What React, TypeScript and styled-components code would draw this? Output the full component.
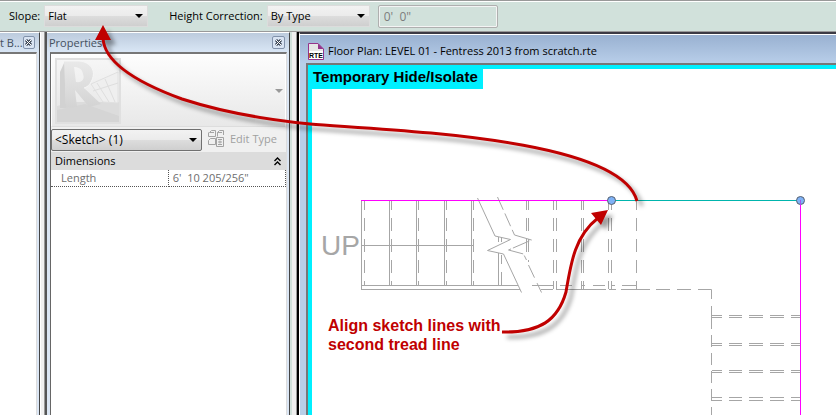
import React from "react";
import styled, { createGlobalStyle } from "styled-components";

const GlobalStyle = createGlobalStyle`
  * { box-sizing: border-box; }
  html, body, #root { height: 100%; }
  body {
    margin: 0;
    overflow: hidden;
    background: #fff;
    color: #000;
    font-family: "Open Sans", "Noto Sans", sans-serif;
    font-size: 11px;
    line-height: 16px;
  }
  select, button, input { font: inherit; color: inherit; margin: 0; }
`;

const Page = styled.div`
  position: relative;
  display: flex;
  flex-direction: column;
  height: 100vh;
  overflow: hidden;
`;

const OptionsBar = styled.header`
  display: flex;
  flex: none;
  align-items: center;
  height: 32px;
  padding: 0 9px;
  background: #d1e1db;
  border-top: 1px solid #999;
  border-bottom: 1px solid #999;
  box-shadow: inset 0 1px #fff;
`;

const Field = styled.div<{ $after: number }>`
  display: flex;
  align-items: center;
  gap: 4px;
  margin-right: ${(p) => p.$after}px;
`;

const SelectBox = styled.span<{ $width: number; $framed?: boolean }>`
  display: grid;
  align-items: center;
  flex: none;
  width: ${(p) => p.$width}px;
  height: 22px;
  border: 1px solid ${(p) => (p.$framed ? "#707070" : "#dcdcdc")};
  border-radius: ${(p) => (p.$framed ? 2 : 0)}px;
  background: linear-gradient(#f2f2f2, #ebebeb 50%, #dddddd 51%, #cfcfcf);
  font-size: ${(p) => (p.$framed ? 12 : 11)}px;
  > * { grid-area: 1 / 1; }
  svg { justify-self: end; margin-right: 4px; pointer-events: none; }
`;

const Select = styled.select`
  appearance: none;
  width: 100%;
  height: 20px;
  padding: 0 14px 0 3px;
  border: 0;
  background: transparent;
`;

const OffsetInput = styled.input`
  width: 120px;
  height: 23px;
  padding: 0 5px;
  border: 1px solid #afafaf;
  border-radius: 2px;
  background: transparent;
  box-shadow: inset 0 0 0 1px #f4f4f4;
  color: #7d7d7d;
  font-size: 12px;
  white-space: pre;
`;

const Workspace = styled.main`
  display: flex;
  flex: 1;
  min-height: 0;
`;

const Dock = styled.section<{ $width: number }>`
  display: flex;
  flex: none;
  flex-direction: column;
  width: ${(p) => p.$width}px;
  border-top: 1px solid #fff;
  border-right: 1px solid #444;
  background: #dbe6f4;
`;

const DockTitle = styled.div`
  display: flex;
  flex: none;
  align-items: center;
  justify-content: space-between;
  height: 19px;
  padding: 0 4px 0 0;
  background: linear-gradient(#bccbdd, #d9e6f5);
  color: #44505f;
  white-space: nowrap;
`;

const DockName = styled.span<{ $indent?: boolean }>`
  padding-left: ${(p) => (p.$indent ? 2 : 0)}px;
`;

const CloseButton = styled.button`
  display: grid;
  place-items: center;
  width: 13px;
  height: 13px;
  padding: 0;
  border: 1px solid #8292ab;
  border-radius: 2px;
  background: #d9e4f3;
`;

const DockBody = styled.div`
  flex: 1;
  margin-right: 2px;
  border-top: 2px solid #777;
  border-right: 1px solid #ddd;
  background: #fff;
`;

const InsetBody = styled(DockBody)`
  margin-left: 3px;
  border-left: 1px solid #666;
`;

const Gutter = styled.div<{ $wide?: boolean }>`
  flex: none;
  width: ${(p) => (p.$wide ? 9 : 7)}px;
  background: ${(p) =>
    p.$wide
      ? "linear-gradient(to right, #d1e1db 0 2px, #f0f0f0 2px 6px, #999 6px 7px, #000 7px)"
      : "linear-gradient(to right, #fff 0 1px, #f0f0f0 1px 4px, #999 4px 5px, #555 5px)"};
`;

const TypePreview = styled.div`
  display: flex;
  align-items: center;
  justify-content: space-between;
  height: 73px;
  padding: 0 2px 0 3px;
  border: 1px solid #fff;
  border-bottom-color: #ddd;
  background: linear-gradient(#fdfdfd, #e8e8e8);
`;

const TypeRow = styled.div`
  display: flex;
  align-items: center;
  gap: 6px;
  height: 25px;
  background: #f0f0f0;
`;

const EditType = styled.button`
  display: flex;
  align-items: center;
  gap: 5px;
  padding: 0 0 2px;
  border: 0;
  background: none;
  white-space: nowrap;
  &:disabled { color: #a0a0a0; }
`;

const GroupHeader = styled.button`
  display: flex;
  align-items: center;
  justify-content: space-between;
  width: 100%;
  height: 18px;
  padding: 0 5px 0 4px;
  border: 0;
  background: #dcdcdc;
`;

const PropertyTable = styled.table`
  width: 100%;
  border-collapse: collapse;
  table-layout: fixed;
  color: #6d6d6d;
  th, td {
    height: 16px;
    padding: 0 0 0 4px;
    border-right: 1px dotted #555;
    border-bottom: 1px dotted #555;
    font-weight: 400;
    text-align: left;
    white-space: pre;
  }
  th { width: 50%; padding-left: 10px; }
`;

const ViewWindow = styled.section`
  display: flex;
  flex: 1;
  flex-direction: column;
  min-width: 0;
  border-top: 2px solid #3c3a44;
  border-left: 1px solid #fff;
  background: #b8cfe8;
`;

const ViewTitle = styled.div`
  display: flex;
  flex: none;
  align-items: center;
  gap: 4px;
  height: 29px;
  padding: 4px 0 0 8px;
  border-top: 1px solid #fff;
  background: linear-gradient(#99b1d1, #b8cee9);
  white-space: nowrap;
`;

const Viewport = styled.div`
  position: relative;
  flex: 1;
  min-height: 0;
  margin-left: 6px;
  overflow: hidden;
  border-top: 2px solid #777;
  border-left: 2px solid #777;
  background: #fff;
  box-shadow: inset 4px 4px #00f0ff;
`;

const IsolateBadge = styled.div`
  width: max-content;
  height: 24px;
  padding: 4px 5px;
  background: #00f0ff;
  font: bold 15px/16px "Liberation Sans", Arial, sans-serif;
`;

const Plan = styled.svg`
  position: absolute;
  top: 4px;
  left: 4px;
`;

const Note = styled.p`
  position: absolute;
  top: 251px;
  left: 20px;
  margin: 0;
  color: #c00000;
  font: bold 16px/19px "Liberation Sans", Arial, sans-serif;
`;

const Arrows = styled.svg`
  position: absolute;
  top: 0;
  left: 0;
  pointer-events: none;
  filter: drop-shadow(5px 5px 2px rgba(0, 0, 0, 0.38));
`;

const Caret = ({ color = "#000" }: { color?: string }) => (
  <svg width="8" height="4" viewBox="0 0 8 4" aria-hidden="true">
    <path d="M0 0H8L4 4Z" fill={color} />
  </svg>
);

const Close = ({ label }: { label: string }) => (
  <CloseButton aria-label={label}>
    <svg width="9" height="9" viewBox="0 0 9 9" aria-hidden="true">
      <path d="M2 2L7 7M7 2L2 7" stroke="#3b4554" strokeWidth="3" />
      <path d="M2 2L7 7M7 2L2 7" stroke="#fff" strokeWidth="1" />
    </svg>
  </CloseButton>
);

const FamilyThumb = () => (
  <svg width="66" height="66" viewBox="0 0 66 66" aria-hidden="true">
    <defs>
      <linearGradient id="thumb" x1="0" y1="0" x2="0" y2="1">
        <stop offset="0" stopColor="#f6f6f6" />
        <stop offset="1" stopColor="#e4e4e4" />
      </linearGradient>
      <linearGradient id="face" x1="0" y1="0" x2="0" y2="1">
        <stop offset="0" stopColor="#e9e9e9" />
        <stop offset="1" stopColor="#d3d3d3" />
      </linearGradient>
    </defs>
    <rect x="1" y="1" width="64" height="64" fill="url(#thumb)" stroke="#e0e0e0" strokeWidth="2" />
    <path d="M2 48L20 44H64V64H2Z" fill="#dcdcdc" />
    <path d="M2 52L30 46L64 58V64H2Z" fill="#d5d5d5" />
    <path d="M36 26L63 14V45L48 44Z" fill="#efefef" stroke="#e0e0e0" />
    <path d="M42 25L54 44M50 21L60 44M38 33L63 25" stroke="#dedede" fill="none" />
    <path d="M10 3L5 14V50L11 50Z" fill="#d2d2d2" />
    <path fillRule="evenodd" d="M9 3H24C36 4 41 13 37 22C35 27 32 29 29 30L46 46L34 49L20 32L22 49L11 50ZM19 9L21 24C27 25 30 21 28 16C27 11 24 9 19 9Z" fill="url(#face)" />
    <path d="M9 3H24C36 4 41 13 37 22C35 27 32 29 29 30" fill="none" stroke="#f6f6f6" />
  </svg>
);

const EditTypeIcon = () => (
  <svg width="17" height="17" viewBox="0 0 17 17" fill="none" stroke="#a3a3a3" aria-hidden="true">
    <path d="M1.5 2.5L3.5 .5H7.5V6.5H.5V2.5M9.5 6.5V2.5L11.5 .5H15.5V5M.5 10.5L2.5 8.5H7.5V14.5H.5V10.5M1.5 2.5H6M9.5 2.5H14" />
    <path d="M8.5 7.5H15.5V16.5H8.5ZM10 9.5H14M10 14.5H14" />
    <path d="M10 12H14M12 10.5V13.5" />
  </svg>
);

const CollapseIcon = () => (
  <svg width="7" height="9" viewBox="0 0 7 9" fill="none" stroke="#000" strokeWidth="1.4" aria-hidden="true">
    <path d="M.5 4L3.5 1L6.5 4M.5 8L3.5 5L6.5 8" />
  </svg>
);

const RteIcon = () => (
  <svg width="16" height="17" viewBox="0 0 16 17" aria-hidden="true">
    <path d="M.5 .5H10L15.5 6V16.5H.5Z" fill="#e6e6e6" stroke="#95348b" />
    <path d="M10 .5V6H15.5Z" fill="#95348b" />
    <rect x="1" y="8" width="14" height="8" fill="#fff" />
    <text x="8" y="15" textAnchor="middle" fontFamily="Liberation Sans, Arial, sans-serif" fontWeight="700" fontSize="7">RTE</text>
  </svg>
);

const solidTreads = [361, 389, 416, 444, 471];
const dashedTreads = [364, 391, 418, 446, 473, 528, 553, 556, 581, 583, 608, 611];
const lowerTreads = [315, 317, 343, 345, 370, 372, 397, 400];

const PlanDrawing = () => (
  <Plan width="1600" height="1000" viewBox="0 0 1600 1000" role="img" aria-label="Stair plan">
    <g transform="translate(-312 -69)" fill="none" stroke="#a6a6a6">
      <g>
        {solidTreads.map((x) => (
          <path key={x} d={`M${x + 0.5} 201V${x === 361 ? 290 : 285}`} />
        ))}
        <path d="M361 245.5H474M361 285.5H518M361 289.5H520M532 285.5H553M541 289.5H553M556 289.5H606M609 289.5H616M621 289.5H650" />
        <path d="M560 285.5H572M581 285.5H585M593 285.5H605M611 285.5H615M622 285.5H636" />
        <path d="M498.5 237V242M498.5 253V285" />
      </g>
      <g strokeDasharray="13 8" strokeDashoffset="4">
        {dashedTreads.map((x) => (
          <path key={x} d={`M${x + 0.5} 201V${x === 528 ? 262 : x > 530 ? 289 : 285}`} />
        ))}
        <path d="M526.5 201V258M501.5 237V242M501.5 255V285M636.5 201V290" />
      </g>
      <path d="M656 289.5H670M677 289.5H691M698 289.5H711.5V299M711.5 306V329M711.5 335V347M711.5 353V365M711.5 371V383M711.5 389V401M711.5 407V419" />
      {lowerTreads.map((y) => (
        <path key={y} d={`M712 ${y + 0.5}H722M729 ${y + 0.5}H742M749 ${y + 0.5}H763M770 ${y + 0.5}H784M791 ${y + 0.5}H800`} />
      ))}
      <path d="M477.5 198L495 236L510.5 239.5L487.5 250.5L503.5 254L521.5 292.5" />
      <path d="M497.5 197L514.5 235" strokeDasharray="14 4" />
      <path d="M514.5 235L531.5 240L508.5 250L523.5 254L526.5 260" strokeDasharray="18 2" />
      <path d="M528.5 265L541.5 292.5" strokeDasharray="14 6" />
      <path d="M361 200.5H611M800.5 200V1000" stroke="#f0f" />
      <path d="M611 200.5H800" stroke="#00b5ad" />
      <g fill="#7fb2f6" stroke="#56606f">
        <circle cx="611.5" cy="200.5" r="4" />
        <circle cx="800.5" cy="200.5" r="4" />
      </g>
      <path d="M800.5 200V205" stroke="#a05ce8" />
      <text x="321" y="255" fill="#a6a6a6" stroke="none" fontFamily="Liberation Sans, Arial, sans-serif" fontSize="28">UP</text>
    </g>
  </Plan>
);

const PropertiesBody = () => (
  <InsetBody>
    <TypePreview><FamilyThumb /><Caret color="#999" /></TypePreview>
    <TypeRow>
      <SelectBox $width={151} $framed>
        <Select aria-label="Selection filter" defaultValue="sketch"><option value="sketch">&lt;Sketch&gt; (1)</option></Select>
        <Caret />
      </SelectBox>
      <EditType disabled><EditTypeIcon />Edit Type</EditType>
    </TypeRow>
    <GroupHeader><span>Dimensions</span><CollapseIcon /></GroupHeader>
    <PropertyTable>
      <tbody><tr><th scope="row">Length</th><td>{"6'  10 205/256\""}</td></tr></tbody>
    </PropertyTable>
  </InsetBody>
);

export default function App() {
  return (
    <Page>
      <GlobalStyle />
      <OptionsBar>
        <Field $after={21}>
          <label htmlFor="slope">Slope:</label>
          <SelectBox $width={104}>
            <Select id="slope" defaultValue="Flat"><option>Flat</option></Select>
            <Caret />
          </SelectBox>
        </Field>
        <Field $after={8}>
          <label htmlFor="height">Height Correction:</label>
          <SelectBox $width={103}>
            <Select id="height" defaultValue="By Type"><option>By Type</option></Select>
            <Caret />
          </SelectBox>
        </Field>
        <OffsetInput aria-label="Height offset" disabled defaultValue={"0'  0\""} />
      </OptionsBar>
      <Workspace>
        <Dock $width={40}>
          <DockTitle><DockName>t B...</DockName><Close label="Close browser" /></DockTitle>
          <DockBody />
        </Dock>
        <Gutter />
        <Dock $width={243}>
          <DockTitle><DockName $indent>Properties</DockName><Close label="Close properties" /></DockTitle>
          <PropertiesBody />
        </Dock>
        <Gutter $wide />
        <ViewWindow>
          <ViewTitle><RteIcon /><span>Floor Plan: LEVEL 01 - Fentress 2013 from scratch.rte</span></ViewTitle>
          <Viewport>
            <IsolateBadge>Temporary Hide/Isolate</IsolateBadge>
            <PlanDrawing />
            <Note>Align sketch lines with<br />second tread line</Note>
          </Viewport>
        </ViewWindow>
      </Workspace>
      <Arrows width="836" height="415" viewBox="0 0 836 415" aria-hidden="true">
        <g fill="none" stroke="#c00000" strokeWidth="3">
          <path d="M103 38C104 60 130 80 182 99C225 113 270 120 310 124C400 131 620 138 637 201" />
          <path d="M502 332C540 333 558 320 566 292C571 262 575 236 598 218" />
        </g>
        <path d="M103 25L111 40H95ZM608 210L591 213L601 225Z" fill="#c00000" />
      </Arrows>
    </Page>
  );
}
